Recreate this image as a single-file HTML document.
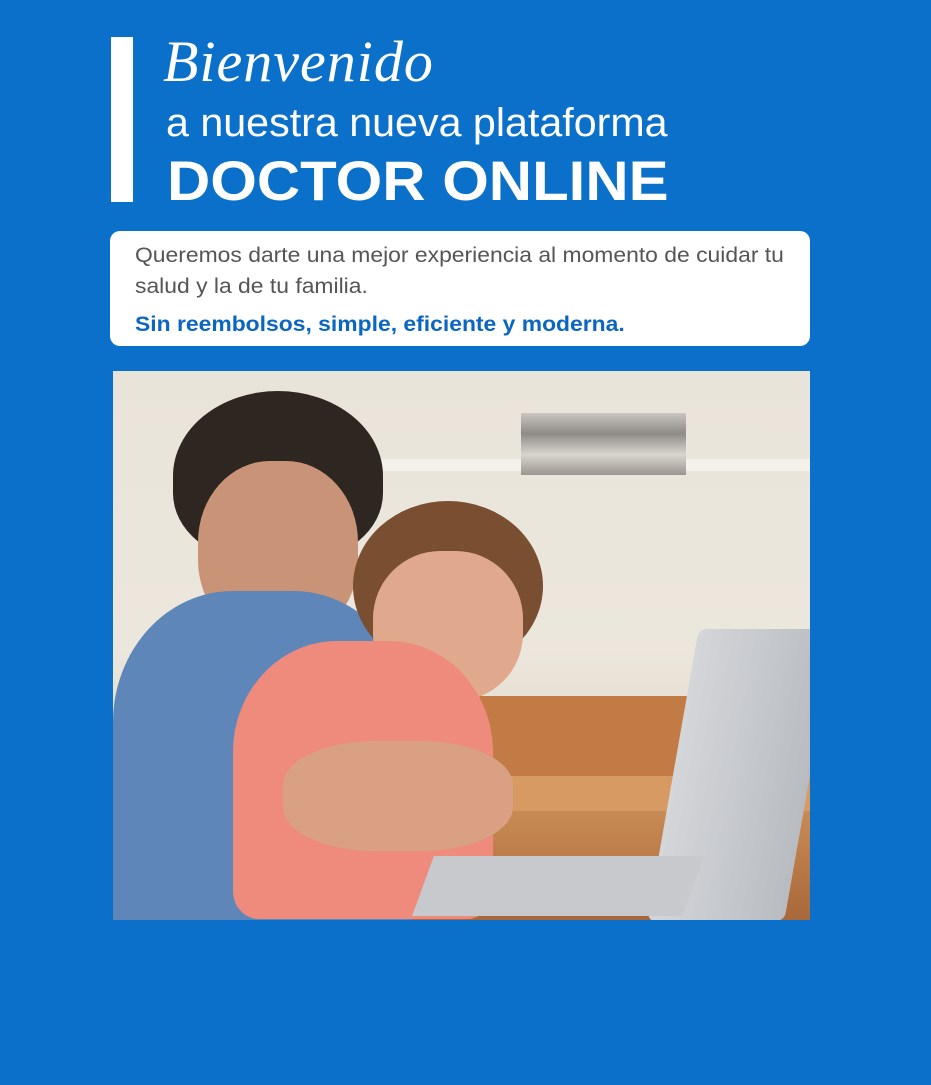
<!DOCTYPE html>
<html><head><meta charset="utf-8"><style>
*{margin:0;padding:0;box-sizing:border-box}
body{width:931px;height:1085px;background:#0a70c9;position:relative;overflow:hidden;font-family:"Liberation Sans",sans-serif}
.bar{position:absolute;left:111px;top:37px;width:22px;height:165px;background:#fff}
.t{position:absolute;color:#fff;white-space:nowrap;transform-origin:left}
.script{left:163px;top:28px;font-family:"Liberation Serif",serif;font-style:italic;font-size:58px;letter-spacing:1px}
.l2{left:166px;top:101px;font-size:40px;transform:scaleX(1.03)}
.l3{left:167px;top:148px;font-size:56px;font-weight:bold;transform:scaleX(1.07)}
.card{position:absolute;left:110px;top:231px;width:700px;height:115px;background:#fff;border-radius:10px;padding:9px 25px}
.card p,.card b{transform-origin:left;transform:scaleX(1.09)}
.card p{font-size:21px;color:#555;line-height:31px;white-space:nowrap}
.card b{display:block;margin-top:11px;font-size:21px;color:#0a66c2;white-space:nowrap}
.photo{position:absolute;left:113px;top:371px;width:697px;height:549px;overflow:hidden;background:linear-gradient(180deg,#e9e4da 0%,#ece7dd 50%,#e7e0d4 60%)}
.photo div{position:absolute}
</style></head><body>
<div class="bar"></div>
<div class="t script">Bienvenido</div>
<div class="t l2">a nuestra nueva plataforma</div>
<div class="t l3">DOCTOR ONLINE</div>
<div class="card"><p>Queremos darte una mejor experiencia al momento de cuidar tu<br>salud y la de tu familia.</p><b>Sin reembolsos, simple, eficiente y moderna.</b></div>
<div class="photo">
 <div style="left:250px;top:88px;width:447px;height:12px;background:#f4f1ea"></div>
 <div style="left:408px;top:42px;width:165px;height:62px;background:linear-gradient(#c9c6c0,#8e8b86,#d8d5cf,#9a968f)"></div>
 <div style="left:360px;top:325px;width:337px;height:80px;background:#c27b44"></div>
 <div style="left:380px;top:405px;width:317px;height:40px;background:#d69a62"></div>
 <div style="left:250px;top:440px;width:447px;height:109px;background:linear-gradient(#c98b55,#a8683a)"></div>
 <div style="left:60px;top:20px;width:210px;height:170px;background:#2e2620;border-radius:50% 50% 40% 40%"></div>
 <div style="left:85px;top:90px;width:160px;height:180px;background:#c99378;border-radius:45%"></div>
 <div style="left:0;top:220px;width:300px;height:329px;background:#5f86b8;border-radius:40% 40% 0 0"></div>
 <div style="left:240px;top:130px;width:190px;height:170px;background:#7a4e30;border-radius:50%"></div>
 <div style="left:260px;top:180px;width:150px;height:150px;background:#e0a88c;border-radius:45%"></div>
 <div style="left:120px;top:270px;width:260px;height:278px;background:#ef8b7c;border-radius:40% 40% 10% 10%"></div>
 <div style="left:170px;top:370px;width:230px;height:110px;background:#d9a084;border-radius:40%"></div>
 <div style="left:560px;top:258px;width:137px;height:292px;background:linear-gradient(90deg,#d4d6d9,#b8bcc1);transform:skewX(-10deg);border-radius:8px"></div>
 <div style="left:310px;top:485px;width:270px;height:60px;background:#c7c9cc;transform:skewX(-20deg)"></div>
</div>
</body></html>
